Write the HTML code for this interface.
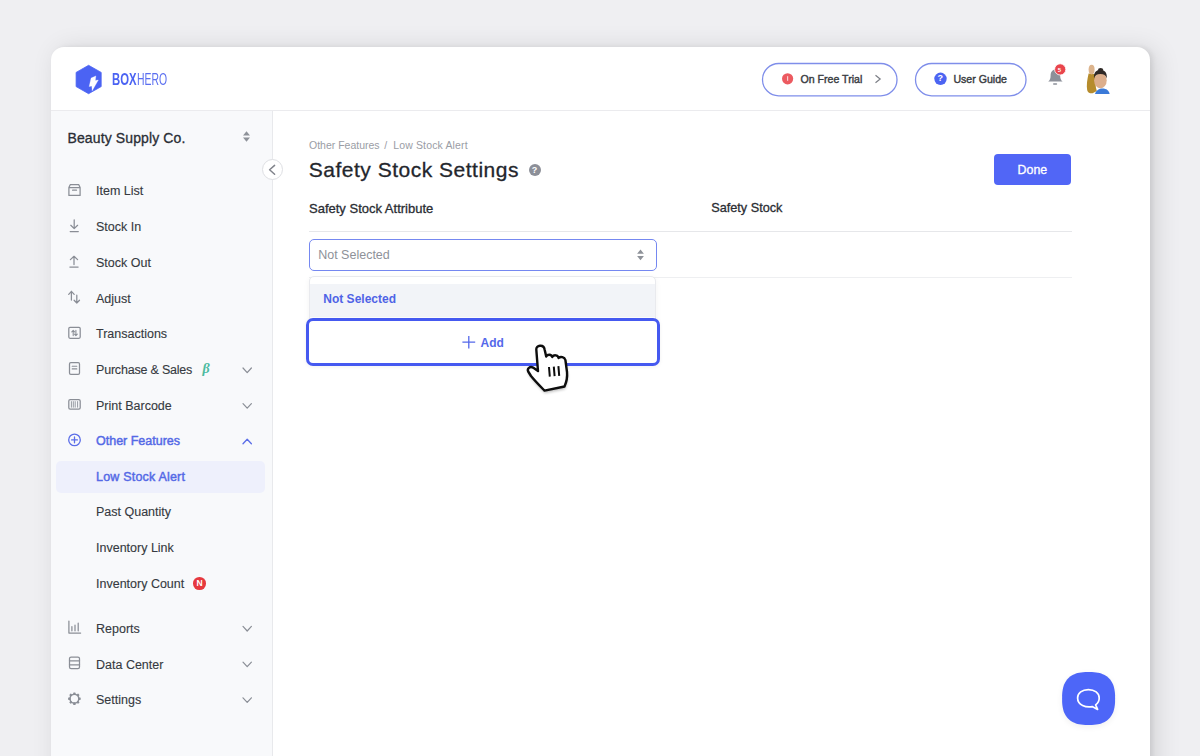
<!DOCTYPE html>
<html><head><meta charset="utf-8">
<style>
*{margin:0;padding:0;box-sizing:border-box}
html,body{width:1200px;height:756px;overflow:hidden;background:#efeff2;font-family:"Liberation Sans",sans-serif;color:#2a2e35;position:relative}
.abs{position:absolute}
.t{position:absolute;white-space:nowrap;line-height:1}
.mi{position:absolute;left:96px;font-size:12.5px;color:#363a41;white-space:nowrap;line-height:1;margin-top:0.5px;-webkit-text-stroke:0.12px #363a41}
svg{position:absolute;overflow:visible}
</style></head><body>
<!-- card -->
<div class="abs" style="left:51px;top:47px;width:1099px;height:740px;background:#fff;border-radius:13px;box-shadow:6px 2px 26px rgba(0,0,0,0.12), 3px 0 5px rgba(0,0,0,0.07)"></div>
<!-- header border -->
<div class="abs" style="left:51px;top:110px;width:1099px;height:1px;background:#ebebee"></div>
<!-- sidebar -->
<div class="abs" style="left:51px;top:111px;width:221px;height:660px;background:#f8f9fb"></div>
<div class="abs" style="left:272px;top:111px;width:1px;height:660px;background:#e8e9ec"></div>

<!-- full-page svg for icons -->
<svg style="left:0;top:0" width="1200" height="756" viewBox="0 0 1200 756">
  <!-- logo hexagon -->
  <path d="M88.6,65.3 L101.2,72.4 L101.2,86.6 L88.6,93.7 L76.1,86.6 L76.1,72.4 Z" fill="#4b63f3" stroke="#4b63f3" stroke-width="0.8" stroke-linejoin="round"/>
  <path d="M95.9,75.9 L91.1,78.1 L89.2,86.6 L91.8,86.1 L92.2,90.8 L98.3,80 L95.3,80.5 Z" fill="#fff" stroke="#fff" stroke-width="0.3" stroke-linejoin="round"/>

  <!-- free trial pill -->
  <rect x="762.5" y="63.5" width="134.5" height="32.3" rx="16.2" fill="#fff" stroke="#7f8eea" stroke-width="1.3"/>
  <circle cx="787.6" cy="78.8" r="5.6" fill="#ec5a60"/>
  <rect x="787" y="76.2" width="1.2" height="4.6" fill="#fff" opacity="0.7"/>
  <path d="M875.5,75.2 L880.2,79 L875.5,82.8" fill="none" stroke="#7c7f86" stroke-width="1.2"/>
  <!-- user guide pill -->
  <rect x="915.5" y="63.5" width="110.5" height="32.3" rx="16.2" fill="#fff" stroke="#7f8eea" stroke-width="1.3"/>
  <circle cx="940.5" cy="78.8" r="6.2" fill="#4c64f2"/>
  <!-- bell -->
  <path d="M1048.2,81.6 C1050,80 1050.6,78.5 1050.6,75.5 C1050.6,72 1052.6,69.6 1055.4,69.6 C1058.2,69.6 1060.2,72 1060.2,75.5 C1060.2,78.5 1060.8,80 1062.6,81.6 Z" fill="#8c9099"/>
  <rect x="1053" y="83.2" width="4.2" height="1.6" rx="0.8" fill="#8c9099"/>
  <circle cx="1060.2" cy="69.4" r="5.6" fill="#e9454c" stroke="#fff" stroke-width="0.8"/>
  <!-- avatar -->
  <path d="M1088.6,73.5 C1087.2,79.5 1086.3,85.5 1087.2,90.2 C1087.9,92.6 1090,93.5 1092.6,93.3 L1096.8,91 C1095.2,86 1095.2,80 1095.8,74.2 Z" fill="#b68c2c"/>
  <ellipse cx="1091.6" cy="69.6" rx="3" ry="4.9" fill="#dcb48d"/>
  <path d="M1095,94 C1096,90.2 1099,88.4 1102.5,88.4 C1106.5,88.4 1109,90.5 1109.6,94 Z" fill="#3b7ad8"/>
  <ellipse cx="1100.4" cy="80.4" rx="6.3" ry="7.9" fill="#dcae8c"/>
  <path d="M1094,78.5 C1093.4,72.5 1096.6,69.8 1100.4,69.8 C1104.2,69.8 1107.4,72.5 1106.8,78.5 C1106,75.2 1104,74 1100.4,74 C1096.8,74 1094.8,75.2 1094,78.5 Z" fill="#2f2926"/>
  <ellipse cx="1100.6" cy="69.8" rx="2.6" ry="1.9" fill="#2f2926"/>

  <!-- sidebar selector arrows -->
  <path d="M246.5,131.3 L250,135.6 L243,135.6 Z M246.5,141.7 L250,137.4 L243,137.4 Z" fill="#8e9299"/>

  <!-- sidebar icons -->
  <g fill="none" stroke="#8a8e96" stroke-width="1.25" stroke-linejoin="round" stroke-linecap="round">
    <!-- item list box -->
    <path d="M68.9,187.6 L70.2,184.7 L78.8,184.7 L80.1,187.6 L80.1,195.4 L68.9,195.4 Z M68.9,187.6 L80.1,187.6 M72.6,190.2 L76.5,190.2"/>
    <!-- stock in -->
    <path d="M74.2,219.8 L74.2,228.6 M70.8,225.3 L74.2,228.6 L77.6,225.3 M70.2,231.5 L78.3,231.5"/>
    <!-- stock out -->
    <path d="M74,256.3 L74,264.6 M70.4,259.6 L74,256.3 L77.6,259.6 M69.9,267.1 L78.1,267.1"/>
    <!-- adjust -->
    <path d="M71.4,291.4 L71.4,300 M68.7,294.4 L71.4,291.4 L74.2,294.4 M76.8,295.2 L76.8,303 M74.1,300.2 L76.8,303 L79.5,300.2"/>
    <!-- transactions -->
    <rect x="68.8" y="327.3" width="11.4" height="11" rx="1.2"/>
    <path d="M73.2,330.4 L73.2,335.6 M71.8,331.8 L73.2,330.4 L74.6,331.8 M75.9,330.4 L75.9,335.6 M74.5,334.2 L75.9,335.6 L77.3,334.2" stroke-width="1.1"/>
    <!-- purchase -->
    <rect x="69.5" y="362.6" width="10" height="11.8" rx="1.3"/>
    <path d="M72.2,366.2 L76.8,366.2 M72.2,368.9 L76.8,368.9" stroke-width="1.1"/>
    <!-- barcode -->
    <rect x="68.8" y="399.6" width="11.4" height="9.6" rx="1.4"/>
    <path d="M71.4,401.6 L71.4,407.2 M73.3,401.6 L73.3,407.2 M75.2,401.6 L75.2,407.2 M77.6,401.6 L77.6,407.2" stroke-width="0.9"/>
    <!-- reports -->
    <path d="M68.9,621 L68.9,633 L80.6,633 M71.9,626.6 L71.9,630.8 M75,625.2 L75,630.8 M78.2,623.2 L78.2,630.8"/>
    <!-- data center -->
    <rect x="69.5" y="657" width="10" height="11.6" rx="1.6"/>
    <path d="M69.5,660.8 L79.5,660.8 M69.5,664.8 L79.5,664.8"/>
  </g>
  <!-- other features circle plus (blue) -->
  <g fill="none" stroke="#5b6ee8" stroke-width="1.3" stroke-linecap="round">
    <circle cx="74.5" cy="439.9" r="5.8"/>
    <path d="M71.6,439.9 L77.4,439.9 M74.5,437 L74.5,442.8"/>
  </g>
  <!-- settings gear -->
  <g transform="translate(74.4,698.7)" fill="#8a8e96">
    <circle cx="0" cy="0" r="4.4" fill="none" stroke="#8a8e96" stroke-width="1.5"/>
    <rect x="-1.2" y="-6.3" width="2.4" height="2.4" rx="0.6"/>
    <rect x="-1.2" y="-6.3" width="2.4" height="2.4" rx="0.6" transform="rotate(45)"/>
    <rect x="-1.2" y="-6.3" width="2.4" height="2.4" rx="0.6" transform="rotate(90)"/>
    <rect x="-1.2" y="-6.3" width="2.4" height="2.4" rx="0.6" transform="rotate(135)"/>
    <rect x="-1.2" y="-6.3" width="2.4" height="2.4" rx="0.6" transform="rotate(180)"/>
    <rect x="-1.2" y="-6.3" width="2.4" height="2.4" rx="0.6" transform="rotate(225)"/>
    <rect x="-1.2" y="-6.3" width="2.4" height="2.4" rx="0.6" transform="rotate(270)"/>
    <rect x="-1.2" y="-6.3" width="2.4" height="2.4" rx="0.6" transform="rotate(315)"/>
  </g>
  <!-- chevrons -->
  <g fill="none" stroke="#8a8e96" stroke-width="1.2" stroke-linecap="round" stroke-linejoin="round">
    <path d="M243,368 L247.2,372.6 L251.4,368"/>
    <path d="M243,403.6 L247.2,408.2 L251.4,403.6"/>
    <path d="M243,626.4 L247.2,631 L251.4,626.4"/>
    <path d="M243,662.1 L247.2,666.7 L251.4,662.1"/>
    <path d="M243,697.8 L247.2,702.4 L251.4,697.8"/>
  </g>
  <path d="M243,443.8 L247.2,439.2 L251.4,443.8" fill="none" stroke="#5b6ee8" stroke-width="1.3" stroke-linecap="round" stroke-linejoin="round"/>
</svg>

<!-- logo text -->
<div class="t" style="left:111.6px;top:71px;font-size:16.4px;font-weight:700;color:#4b63f3;transform:scaleX(0.69);transform-origin:left top">BOX</div>
<div class="t" style="left:137.4px;top:71px;font-size:16.4px;color:#5a6ef0;transform:scaleX(0.635);transform-origin:left top">HERO</div>

<!-- header button text -->
<div class="t" style="left:800.5px;top:73.6px;font-size:10.6px;color:#383b41;-webkit-text-stroke:0.4px #383b41">On Free Trial</div>
<div class="t" style="left:937.4px;top:74.4px;font-size:9px;font-weight:700;color:#fff">?</div>
<div class="t" style="left:953.4px;top:73.6px;font-size:10.6px;color:#383b41;-webkit-text-stroke:0.4px #383b41">User Guide</div>
<div class="t" style="left:1057.8px;top:66.8px;font-size:6px;font-weight:700;color:#fff">5</div>

<!-- sidebar content -->
<div class="t" style="left:67.5px;top:130.6px;font-size:14px;letter-spacing:0.12px;color:#2a2e35;-webkit-text-stroke:0.3px #2a2e35">Beauty Supply Co.</div>

<div class="abs" style="left:56px;top:460.5px;width:209px;height:32px;border-radius:5px;background:#eef0fc"></div>

<div class="mi" style="top:184.7px">Item List</div>
<div class="mi" style="top:220.8px">Stock In</div>
<div class="mi" style="top:256.5px">Stock Out</div>
<div class="mi" style="top:292px">Adjust</div>
<div class="mi" style="top:327.7px">Transactions</div>
<div class="mi" style="top:363.6px;letter-spacing:-0.2px">Purchase &amp; Sales</div>
<div class="t" style="left:202.5px;top:362px;font-size:14px;font-style:italic;font-weight:700;color:#4cbba0;font-family:'Liberation Serif',serif">&#946;</div>
<div class="mi" style="top:399.1px">Print Barcode</div>
<div class="mi" style="top:434.8px;color:#5469e6;-webkit-text-stroke:0.45px #5469e6">Other Features</div>
<div class="mi" style="top:470.5px;letter-spacing:0.2px;color:#5469e6;-webkit-text-stroke:0.45px #5469e6">Low Stock Alert</div>
<div class="mi" style="top:505.4px">Past Quantity</div>
<div class="mi" style="top:541.9px">Inventory Link</div>
<div class="mi" style="top:577.2px">Inventory Count</div>
<div class="abs" style="left:193.2px;top:577.2px;width:12.6px;height:12.6px;border-radius:50%;background:#e6393f;color:#fff;font-size:8.5px;font-weight:700;text-align:center;line-height:12.6px">N</div>
<div class="mi" style="top:622.6px">Reports</div>
<div class="mi" style="top:658.1px">Data Center</div>
<div class="mi" style="top:693.2px">Settings</div>

<!-- collapse button -->
<div class="abs" style="left:261.5px;top:158.8px;width:21px;height:21px;border-radius:50%;background:#fff;border:1px solid #dedfe3"></div>
<svg style="left:0;top:0" width="1200" height="756"><path d="M274.6,165.4 L269.6,169.8 L274.6,174.2" fill="none" stroke="#80838b" stroke-width="1.5" stroke-linecap="round" stroke-linejoin="round"/></svg>

<!-- content -->
<div class="t" style="left:309px;top:140.1px;font-size:10.5px;color:#9a9da5">Other Features</div><div class="t" style="left:384.3px;top:140.1px;font-size:10.5px;color:#9a9da5">/</div><div class="t" style="left:393.2px;top:140.1px;font-size:10.5px;letter-spacing:0.15px;color:#9a9da5">Low Stock Alert</div>
<div class="t" style="left:308.8px;top:159.4px;font-size:21px;letter-spacing:0.5px;color:#23262c;-webkit-text-stroke:0.3px #23262c">Safety Stock Settings</div>
<div class="abs" style="left:528.6px;top:164px;width:12px;height:12px;border-radius:50%;background:#8c8f98;color:#fff;font-size:9px;font-weight:700;text-align:center;line-height:12px">?</div>

<div class="abs" style="left:994px;top:153.8px;width:76.7px;height:31.3px;border-radius:4px;background:#5166f6"></div>
<div class="t" style="left:1017.6px;top:164px;font-size:12.4px;color:#fff;-webkit-text-stroke:0.3px #fff">Done</div>

<div class="t" style="left:309px;top:202.4px;font-size:13px;color:#2a2d33;-webkit-text-stroke:0.3px #2a2d33">Safety Stock Attribute</div>
<div class="t" style="left:711.2px;top:202.2px;font-size:12.7px;color:#2a2d33;-webkit-text-stroke:0.3px #2a2d33">Safety Stock</div>
<div class="abs" style="left:309px;top:231px;width:763px;height:1.3px;background:#e6e7ea"></div>
<div class="abs" style="left:309px;top:277.4px;width:763px;height:1px;background:#eeeff1"></div>

<!-- select -->
<div class="abs" style="left:308.5px;top:238.8px;width:348.3px;height:32px;border:1.8px solid #7588f1;border-radius:5px;background:#fff"></div>
<div class="t" style="left:318.2px;top:248.7px;font-size:12.5px;color:#8e9299">Not Selected</div>
<svg style="left:0;top:0" width="1200" height="756"><path d="M640.5,249.6 L643.9,253.8 L637.1,253.8 Z M640.5,260.2 L643.9,256 L637.1,256 Z" fill="#8e9299"/></svg>

<!-- dropdown -->
<div class="abs" style="left:308.7px;top:275.6px;width:347.6px;height:50px;border:1px solid #e9eaee;border-radius:5px;background:#fff;box-shadow:0 2px 6px rgba(0,0,0,0.05)"></div>
<div class="abs" style="left:309.7px;top:283.5px;width:345.6px;height:33px;background:#f2f4f8"></div>
<div class="t" style="left:323.3px;top:292.6px;font-size:12px;font-weight:700;color:#4f63e6">Not Selected</div>

<!-- add button -->
<div class="abs" style="left:306px;top:317.6px;width:354px;height:48.6px;border:3.6px solid #4559f0;border-radius:7px;background:#fff;box-shadow:0 1px 4px rgba(0,0,0,0.06)"></div>
<svg style="left:0;top:0" width="1200" height="756"><path d="M462.4,342.2 L475.2,342.2 M468.8,336 L468.8,348.4" fill="none" stroke="#5468ea" stroke-width="1.3"/></svg>
<div class="t" style="left:480.6px;top:336.6px;font-size:12px;font-weight:700;color:#5468ea">Add</div>

<!-- hand cursor -->
<svg style="left:0;top:0" width="1200" height="756">
  <defs><filter id="hs" x="-50%" y="-50%" width="200%" height="200%"><feGaussianBlur stdDeviation="1.8"/></filter></defs>
  <path id="hp" d="M536.3,349.5 C535.8,345.2 543.8,343.8 544.6,349.5 L546.2,356.5 C547.5,354 551.5,354 552.3,357 C553.8,354.5 557.8,354.8 558.6,358 C560.5,356 564.5,357 565.4,360 L567,372 C567.5,377 566.5,382 564.5,386.5 L544.5,390.6 C540,386 535,381 531,376 L528.2,371.5 C526.8,368.5 530,366 533,367.6 L538,371 Z" fill="#000" opacity="0.28" filter="url(#hs)" transform="translate(0.5,2.5)"/>
  <path d="M536.3,349.5 C535.8,345.2 543.8,343.8 544.6,349.5 L546.2,356.5 C547.5,354 551.5,354 552.3,357 C553.8,354.5 557.8,354.8 558.6,358 C560.5,356 564.5,357 565.4,360 L567,372 C567.5,377 566.5,382 564.5,386.5 L544.5,390.6 C540,386 535,381 531,376 L528.2,371.5 C526.8,368.5 530,366 533,367.6 L538,371 Z" fill="#fff" stroke="#0d0d0d" stroke-width="2.4" stroke-linejoin="round"/>
  <path d="M549,367 L549.8,376.6 M553.8,366.6 L554.6,376.2 M558.4,366.2 L559.2,375.8" stroke="#0d0d0d" stroke-width="2" stroke-linecap="butt"/>
</svg>

<!-- chat button -->

<svg style="left:0;top:0" width="1200" height="756">
  <defs><filter id="cs" x="-30%" y="-30%" width="160%" height="160%"><feGaussianBlur stdDeviation="3"/></filter></defs>
  <path d="M1115.10,698.50 L1115.06,701.75 L1114.93,704.03 L1114.71,706.04 L1114.40,707.87 L1114.01,709.57 L1113.53,711.16 L1112.97,712.65 L1112.32,714.05 L1111.59,715.36 L1110.78,716.59 L1109.88,717.74 L1108.90,718.80 L1107.84,719.78 L1106.69,720.68 L1105.46,721.49 L1104.15,722.22 L1102.75,722.87 L1101.26,723.43 L1099.67,723.91 L1097.97,724.30 L1096.14,724.61 L1094.13,724.83 L1091.85,724.96 L1088.60,725.00 L1085.35,724.96 L1083.07,724.83 L1081.06,724.61 L1079.23,724.30 L1077.53,723.91 L1075.94,723.43 L1074.45,722.87 L1073.05,722.22 L1071.74,721.49 L1070.51,720.68 L1069.36,719.78 L1068.30,718.80 L1067.32,717.74 L1066.42,716.59 L1065.61,715.36 L1064.88,714.05 L1064.23,712.65 L1063.67,711.16 L1063.19,709.57 L1062.80,707.87 L1062.49,706.04 L1062.27,704.03 L1062.14,701.75 L1062.10,698.50 L1062.14,695.25 L1062.27,692.97 L1062.49,690.96 L1062.80,689.13 L1063.19,687.43 L1063.67,685.84 L1064.23,684.35 L1064.88,682.95 L1065.61,681.64 L1066.42,680.41 L1067.32,679.26 L1068.30,678.20 L1069.36,677.22 L1070.51,676.32 L1071.74,675.51 L1073.05,674.78 L1074.45,674.13 L1075.94,673.57 L1077.53,673.09 L1079.23,672.70 L1081.06,672.39 L1083.07,672.17 L1085.35,672.04 L1088.60,672.00 L1091.85,672.04 L1094.13,672.17 L1096.14,672.39 L1097.97,672.70 L1099.67,673.09 L1101.26,673.57 L1102.75,674.13 L1104.15,674.78 L1105.46,675.51 L1106.69,676.32 L1107.84,677.22 L1108.90,678.20 L1109.88,679.26 L1110.78,680.41 L1111.59,681.64 L1112.32,682.95 L1112.97,684.35 L1113.53,685.84 L1114.01,687.43 L1114.40,689.13 L1114.71,690.96 L1114.93,692.97 L1115.06,695.25 Z" fill="#000" opacity="0.06" filter="url(#cs)" transform="translate(0,2)"/>
  <path d="M1115.10,698.50 L1115.06,701.75 L1114.93,704.03 L1114.71,706.04 L1114.40,707.87 L1114.01,709.57 L1113.53,711.16 L1112.97,712.65 L1112.32,714.05 L1111.59,715.36 L1110.78,716.59 L1109.88,717.74 L1108.90,718.80 L1107.84,719.78 L1106.69,720.68 L1105.46,721.49 L1104.15,722.22 L1102.75,722.87 L1101.26,723.43 L1099.67,723.91 L1097.97,724.30 L1096.14,724.61 L1094.13,724.83 L1091.85,724.96 L1088.60,725.00 L1085.35,724.96 L1083.07,724.83 L1081.06,724.61 L1079.23,724.30 L1077.53,723.91 L1075.94,723.43 L1074.45,722.87 L1073.05,722.22 L1071.74,721.49 L1070.51,720.68 L1069.36,719.78 L1068.30,718.80 L1067.32,717.74 L1066.42,716.59 L1065.61,715.36 L1064.88,714.05 L1064.23,712.65 L1063.67,711.16 L1063.19,709.57 L1062.80,707.87 L1062.49,706.04 L1062.27,704.03 L1062.14,701.75 L1062.10,698.50 L1062.14,695.25 L1062.27,692.97 L1062.49,690.96 L1062.80,689.13 L1063.19,687.43 L1063.67,685.84 L1064.23,684.35 L1064.88,682.95 L1065.61,681.64 L1066.42,680.41 L1067.32,679.26 L1068.30,678.20 L1069.36,677.22 L1070.51,676.32 L1071.74,675.51 L1073.05,674.78 L1074.45,674.13 L1075.94,673.57 L1077.53,673.09 L1079.23,672.70 L1081.06,672.39 L1083.07,672.17 L1085.35,672.04 L1088.60,672.00 L1091.85,672.04 L1094.13,672.17 L1096.14,672.39 L1097.97,672.70 L1099.67,673.09 L1101.26,673.57 L1102.75,674.13 L1104.15,674.78 L1105.46,675.51 L1106.69,676.32 L1107.84,677.22 L1108.90,678.20 L1109.88,679.26 L1110.78,680.41 L1111.59,681.64 L1112.32,682.95 L1112.97,684.35 L1113.53,685.84 L1114.01,687.43 L1114.40,689.13 L1114.71,690.96 L1114.93,692.97 L1115.06,695.25 Z" fill="#4d66f8"/>
  <path d="M1082.6,705.4 C1079.2,703.8 1077.6,701 1077.6,698 C1077.6,693 1082.2,689.6 1088.4,689.6 C1094.6,689.6 1099.2,693 1099.2,698 C1099.2,701 1097.8,703.4 1095.6,704.9 L1097.6,709.4 L1092.2,706.6 C1088.8,707.2 1085.4,706.8 1082.6,705.4 Z" fill="none" stroke="#fff" stroke-width="1.7" stroke-linejoin="round"/>
</svg>
</body></html>
